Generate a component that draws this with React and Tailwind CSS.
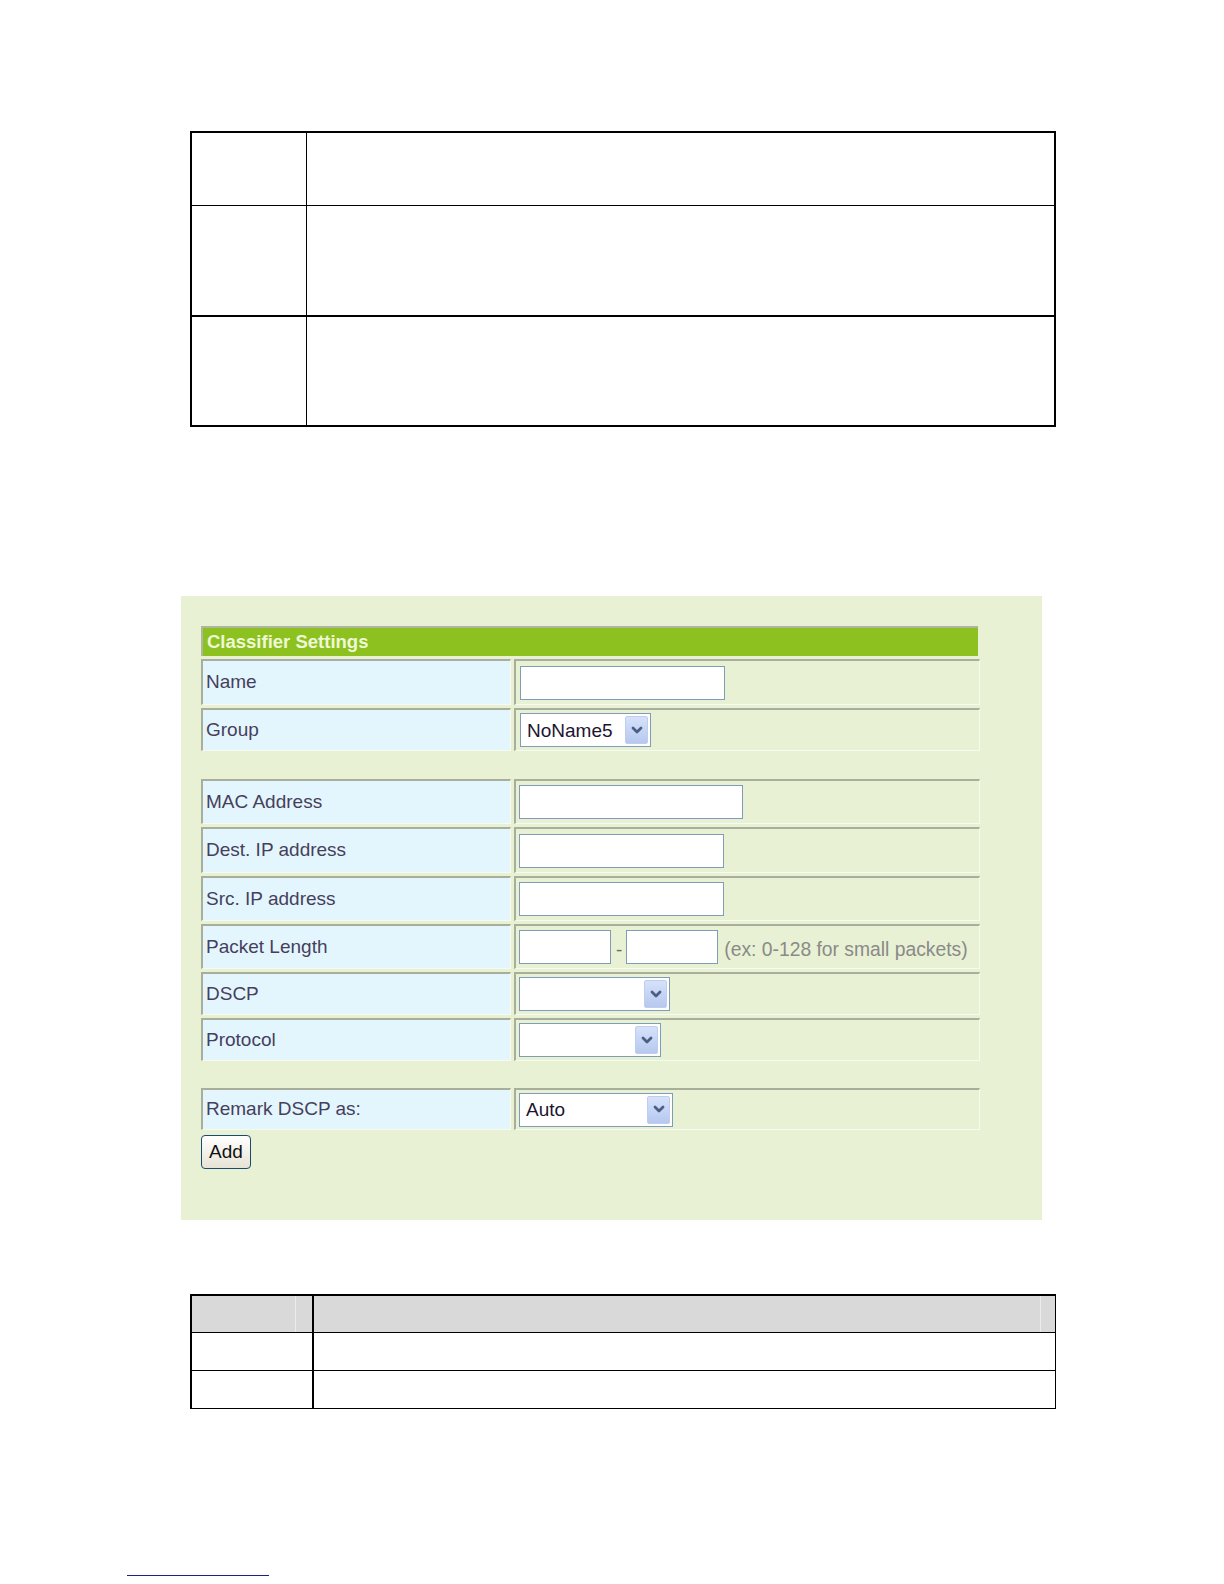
import React from "react";

const font = { fontFamily: '"Liberation Sans", Arial, sans-serif' };

function Chevron() {
  return (
    <svg width="12" height="9" viewBox="0 0 12 9">
      <path d="M2 2 L6 6 L10 2" fill="none" stroke="#4a5f86" strokeWidth="2.8" strokeLinecap="round" strokeLinejoin="round" />
    </svg>
  );
}

function Select({ className, text }) {
  return (
    <div className={"h-[34px] bg-white border border-[#7f9db9] flex items-stretch p-[2px] " + className}>
      <div className="flex-1 flex items-center pl-[4px] text-[19px] text-[#1d1530] leading-none">{text}</div>
      <div className="w-[23px] rounded-[2px] bg-gradient-to-b from-[#d6e2fb] to-[#b6c8ef] border border-[#bfcdee] flex items-center justify-center">
        <Chevron />
      </div>
    </div>
  );
}

function Input({ className }) {
  return <div className={"h-[34px] bg-white border border-[#7f9db9] " + className} />;
}

const cellBorder =
  "border-t-2 border-l-2 border-r border-b border-t-[#a9ae9a] border-l-[#a9ae9a] border-r-[#f7faee] border-b-[#f7faee]";

function Row({ label, h, mt = "mt-[3px]", children }) {
  return (
    <div className={"flex w-[779px] " + h + " " + mt}>
      <div className={"w-[310px] bg-[#e4f6fd] flex items-center pl-[3px] text-[19px] text-[#463f5c] " + cellBorder}>
        {label}
      </div>
      <div className={"ml-[3px] flex-1 flex items-center pl-[3px] " + cellBorder}>{children}</div>
    </div>
  );
}

export default function App() {
  return (
    <div className="w-[1224px] h-[1584px] bg-white flex flex-col" style={font}>
      {/* top table */}
      <div className="mt-[131px] ml-[190px] w-[866px] border-2 border-black flex flex-col">
        <div className="flex h-[73px] border-b border-black">
          <div className="w-[115px] border-r border-black" />
          <div className="flex-1" />
        </div>
        <div className="flex h-[111px] border-b-2 border-black">
          <div className="w-[115px] border-r border-black" />
          <div className="flex-1" />
        </div>
        <div className="flex h-[108px]">
          <div className="w-[115px] border-r border-black" />
          <div className="flex-1" />
        </div>
      </div>

      {/* panel */}
      <div className="mt-[169px] ml-[181px] w-[861px] h-[624px] bg-[#e8f1d3] pt-[30px] pl-[20px] flex flex-col">
        <div className="w-[777px] h-[30px] bg-[#8cc11f] border-t-2 border-l-2 border-t-[#b0b5a0] border-l-[#b0b5a0] flex items-center pl-[4px] text-[18.5px] font-bold text-[#eef8d6]">
          Classifier Settings
        </div>
        <Row label="Name" h="h-[46px]">
          <Input className="w-[205px] ml-[1px]" />
        </Row>
        <Row label="Group" h="h-[43px]">
          <Select className="w-[131px] ml-[1px]" text="NoName5" />
        </Row>

        <Row label="MAC Address" h="h-[45px]" mt="mt-[28px]">
          <Input className="w-[224px]" />
        </Row>
        <Row label="Dest. IP address" h="h-[46px]">
          <Input className="w-[205px]" />
        </Row>
        <Row label="Src. IP address" h="h-[45px]">
          <Input className="w-[205px]" />
        </Row>
        <Row label="Packet Length" h="h-[45px]">
          <Input className="w-[92px]" />
          <span className="ml-[5px] mr-[4px] text-[19px] text-[#6b6b6b] mt-[6px]">-</span>
          <Input className="w-[92px]" />
          <span className="ml-[6px] mt-[6px] text-[19.3px] text-[#8a8a8a] whitespace-nowrap">(ex: 0-128 for small packets)</span>
        </Row>
        <Row label="DSCP" h="h-[43px]">
          <Select className="w-[151px]" text="" />
        </Row>
        <Row label="Protocol" h="h-[43px]">
          <Select className="w-[142px]" text="" />
        </Row>

        <Row label="Remark DSCP as:" h="h-[42px]" mt="mt-[27px]">
          <Select className="w-[154px]" text="Auto" />
        </Row>
        <div className="mt-[5px] w-[50px] h-[34px] rounded-[4px] border border-[#1d4a6c] bg-gradient-to-b from-white to-[#e6e3d6] flex items-center justify-center text-[19px] text-[#111]">
          Add
        </div>
      </div>

      {/* bottom table */}
      <div className="mt-[74px] ml-[190px] w-[866px] border-t-2 border-l-2 border-r border-b border-black flex flex-col">
        <div className="flex h-[37px] border-b border-black bg-[#d9d9d9]">
          <div className="w-[122px] border-r-2 border-black flex justify-end">
            <div className="w-px h-full bg-[#ececec] mr-[16px]" />
          </div>
          <div className="flex-1 flex justify-end">
            <div className="w-px h-full bg-[#ececec] mr-[14px]" />
          </div>
        </div>
        <div className="flex h-[38px] border-b border-black">
          <div className="w-[122px] border-r-2 border-black" />
          <div className="flex-1" />
        </div>
        <div className="flex h-[37px]">
          <div className="w-[122px] border-r-2 border-black" />
          <div className="flex-1" />
        </div>
      </div>

      {/* link underline */}
      <div className="mt-[166px] ml-[127px] w-[142px] h-px bg-[#1f1f8c]" />
    </div>
  );
}
